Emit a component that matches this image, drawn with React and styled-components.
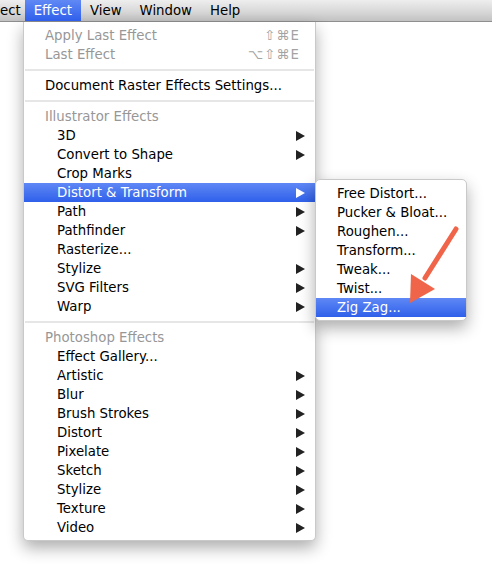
import React from 'react';
import styled, { createGlobalStyle } from 'styled-components';

const GlobalStyle = createGlobalStyle`
  html, body {
    margin: 0;
    padding: 0;
    background: #ffffff;
  }
  body {
    font-family: "DejaVu Sans", "Liberation Sans", sans-serif;
    font-size: 13.3px;
    color: #000;
  }
`;

const Page = styled.div`
  position: relative;
  width: 492px;
  height: 564px;
  overflow: hidden;
  background: #fff;
`;

const MenuBar = styled.div`
  display: flex;
  height: 21px;
  background: linear-gradient(#eeeeee, #d6d6d6 60%, #c2c2c2);
  border-bottom: 1px solid #8f8f8f;
`;

const MenuTitle = styled.div`
  height: 21px;
  line-height: 21px;
  padding: ${p => (p.$clipped ? '0 4px 0 0' : '0 9px')};
  color: ${p => (p.$active ? '#fff' : '#000')};
  background: ${p => (p.$active ? 'linear-gradient(#6089f5, #2f5feb)' : 'transparent')};
`;

const Dropdown = styled.div`
  margin-left: 23px;
  width: 293px;
  padding: 4px 0 3px;
  background: #fff;
  border: 1px solid #c9c9c9;
  border-top: none;
  border-radius: 0 0 5px 5px;
  box-shadow: 0 7px 16px rgba(0, 0, 0, 0.32);
  box-sizing: border-box;
`;

const Row = styled.div`
  position: relative;
  display: flex;
  align-items: center;
  height: 19px;
  padding-left: ${p => p.$indent}px;
  padding-right: 10px;
  color: ${p => (p.$active ? '#fff' : p.$muted ? '#979797' : '#000')};
  background: ${p => (p.$active ? 'linear-gradient(#5f88f5, #2f60ea)' : 'transparent')};
  white-space: nowrap;
`;

const Label = styled.span`
  flex: 1;
`;

const Shortcut = styled.span`
  margin-right: 5px;
  color: #a3a3a3;
  letter-spacing: 1px;
`;

const Separator = styled.div`
  height: 2px;
  margin: 5px 1px;
  background: #e6e6e6;
`;

const Submenu = styled.div`
  position: absolute;
  left: 100%;
  top: -4px;
  width: 152px;
  padding: 4px 0 3px;
  background: #fff;
  border: 1px solid #c9c9c9;
  border-radius: 5px;
  box-shadow: 0 7px 16px rgba(0, 0, 0, 0.32);
  box-sizing: border-box;
  z-index: 2;
`;

const Overlay = styled.svg`
  position: absolute;
  left: 0;
  top: 0;
  pointer-events: none;
  z-index: 3;
`;

const SubArrow = ({ light }) => (
  <svg width="9" height="10" viewBox="0 0 9 10">
    <polygon points="0,0 9,5 0,10" fill={light ? '#fff' : '#222'} />
  </svg>
);

const subItems = ['Free Distort...', 'Pucker & Bloat...', 'Roughen...', 'Transform...', 'Tweak...', 'Twist...', 'Zig Zag...'];

const menu = [
  { label: 'Apply Last Effect', muted: true, indent: 21, shortcut: '⇧⌘E' },
  { label: 'Last Effect', muted: true, indent: 21, shortcut: '⌥⇧⌘E' },
  { sep: true },
  { label: 'Document Raster Effects Settings...', indent: 21 },
  { sep: true },
  { label: 'Illustrator Effects', muted: true, indent: 21 },
  { label: '3D', sub: true },
  { label: 'Convert to Shape', sub: true },
  { label: 'Crop Marks' },
  { label: 'Distort & Transform', sub: true, active: true, children: subItems },
  { label: 'Path', sub: true },
  { label: 'Pathfinder', sub: true },
  { label: 'Rasterize...' },
  { label: 'Stylize', sub: true },
  { label: 'SVG Filters', sub: true },
  { label: 'Warp', sub: true },
  { sep: true },
  { label: 'Photoshop Effects', muted: true, indent: 21 },
  { label: 'Effect Gallery...' },
  { label: 'Artistic', sub: true },
  { label: 'Blur', sub: true },
  { label: 'Brush Strokes', sub: true },
  { label: 'Distort', sub: true },
  { label: 'Pixelate', sub: true },
  { label: 'Sketch', sub: true },
  { label: 'Stylize', sub: true },
  { label: 'Texture', sub: true },
  { label: 'Video', sub: true },
];

const App = () => {
  return (
    <Page>
      <GlobalStyle />
      <MenuBar>
        <MenuTitle $clipped>ect</MenuTitle>
        <MenuTitle $active>Effect</MenuTitle>
        <MenuTitle>View</MenuTitle>
        <MenuTitle>Window</MenuTitle>
        <MenuTitle>Help</MenuTitle>
      </MenuBar>
      <Dropdown>
        {menu.map((item, i) =>
          item.sep ? (
            <Separator key={i} />
          ) : (
            <Row key={i} $indent={item.indent || 33} $muted={item.muted} $active={item.active}>
              <Label>{item.label}</Label>
              {item.shortcut && <Shortcut>{item.shortcut}</Shortcut>}
              {item.sub && <SubArrow light={item.active} />}
              {item.children && (
                <Submenu>
                  {item.children.map((c, j) => (
                    <Row key={c} $indent={21} $active={j === item.children.length - 1}>
                      <Label>{c}</Label>
                    </Row>
                  ))}
                </Submenu>
              )}
            </Row>
          )
        )}
      </Dropdown>
      <Overlay width="492" height="564" viewBox="0 0 492 564">
        <line x1="456" y1="229" x2="425" y2="278" stroke="#f06549" strokeWidth="5" strokeLinecap="round" />
        <polygon points="410,303 411,274 435,289" fill="#f06549" />
      </Overlay>
    </Page>
  );
};

export default App;
